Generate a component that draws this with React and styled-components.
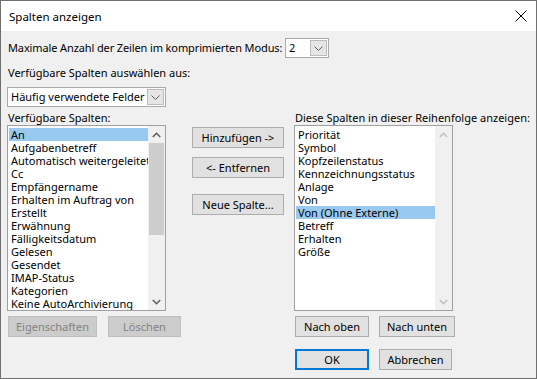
import React from 'react';
import styled, { createGlobalStyle } from 'styled-components';

const Global = createGlobalStyle`
  html, body { margin: 0; padding: 0; background: #ffffff; }
  body { font-family: "Noto Sans", "Segoe UI", sans-serif; font-size: 11px; color: #000; }
  * { box-sizing: border-box; }
`;

const Window = styled.div`
  width: 537px;
  height: 379px;
  border: 1px solid #6f6f6f;
  background: #f0f0f0;
  display: flex;
  flex-direction: column;
  overflow: hidden;
`;

const TitleBar = styled.div`
  height: 30px;
  flex-shrink: 0;
  background: #ffffff;
  display: flex;
  align-items: center;
  justify-content: space-between;
  padding: 0 9px 0 8px;
`;

const Title = styled.span`
  font-size: 11.5px;
  color: #000;
`;

const CloseBtn = styled.div`
  width: 12px;
  height: 12px;
  display: flex;
`;

const Body = styled.div`
  padding: 7px 0 0 6px;
  display: flex;
  flex-direction: column;
`;

const Row = styled.div`
  display: flex;
  align-items: center;
  gap: ${p => p.$gap || 0}px;
  margin-top: ${p => p.$mt || 0}px;
  margin-left: ${p => p.$ml || 0}px;
`;

const Label = styled.div`
  height: 14px;
  line-height: 14px;
  margin-top: ${p => p.$mt || 0}px;
  padding-left: 1px;
  width: ${p => (p.$w ? `${p.$w}px` : 'auto')};
  letter-spacing: ${p => p.$ls || 0}px;
  white-space: nowrap;
`;

const Combo = styled.div`
  width: ${p => p.$w}px;
  height: 20px;
  border: 1px solid #a9a9a9;
  background: #ffffff;
  display: flex;
  padding: 1px;
  margin-top: ${p => p.$mt || 0}px;
`;

const ComboText = styled.div`
  flex: 1;
  line-height: 16px;
  padding-left: 2px;
  white-space: nowrap;
  overflow: hidden;
`;

const DropBtn = styled.div`
  width: 17px;
  height: 16px;
  background: #e5e5e5;
  border: 1px solid #bcbcbc;
  display: flex;
  align-items: center;
  justify-content: center;
`;

const Columns = styled.div`
  display: flex;
  margin-top: 4px;
`;

const Col = styled.div`
  width: ${p => p.$w}px;
  display: flex;
  flex-direction: column;
`;

const MidButtons = styled.div`
  display: flex;
  flex-direction: column;
  padding-top: 16px;
`;

const ListBox = styled.div`
  width: 159px;
  height: 186px;
  border: 1px solid #a0a0a0;
  background: #ffffff;
  display: flex;
  padding-left: 1px;
  overflow: hidden;
`;

const Items = styled.div`
  width: 139px;
  padding-top: 2px;
  display: flex;
  flex-direction: column;
  overflow: hidden;
`;

const Item = styled.div`
  height: 13px;
  line-height: 13px;
  padding-left: 2px;
  white-space: nowrap;
  flex-shrink: 0;
  background: ${p => (p.$sel ? '#99c9ef' : 'transparent')};
`;

const ScrollBar = styled.div`
  width: 17px;
  height: 100%;
  background: #f0f0f0;
  display: flex;
  flex-direction: column;
`;

const ScrollArrow = styled.div`
  height: 17px;
  flex-shrink: 0;
  display: flex;
  align-items: center;
  justify-content: center;
`;

const ScrollTrack = styled.div`
  flex: 1;
  padding: 0 1px;
`;

const Thumb = styled.div`
  height: 92px;
  background: #cdcdcd;
`;

const Btn = styled.button`
  width: ${p => p.$w}px;
  height: 21px;
  margin-top: ${p => p.$mt || 0}px;
  padding: 0;
  font-family: "Noto Sans", "Segoe UI", sans-serif;
  font-size: 11px;
  line-height: 17px;
  color: ${p => (p.disabled ? '#838383' : '#000')};
  background: ${p => (p.disabled ? '#cccccc' : '#e1e1e1')};
  border: ${p => (p.$default ? '2px solid #0078d7' : p.disabled ? '1px solid #bfbfbf' : '1px solid #adadad')};
  white-space: nowrap;
`;

const Chevron = ({ color = '#606060' }) => (
  <svg width="9" height="5" viewBox="0 0 9 5">
    <polyline points="0.5,0.5 4.5,4.5 8.5,0.5" fill="none" stroke={color} strokeWidth="1" />
  </svg>
);

const ScrollChevron = ({ up, color }) => (
  <svg width="9" height="6" viewBox="0 0 9 6">
    <polyline
      points={up ? '0.8,5 4.5,1.3 8.2,5' : '0.8,1 4.5,4.7 8.2,1'}
      fill="none"
      stroke={color}
      strokeWidth="1.6"
    />
  </svg>
);

const List = ({ items, selected, enabled }) => {
  const color = enabled ? '#606060' : '#c0c0c0';
  return (
    <ListBox>
      <Items>
        {items.map(it => (
          <Item key={it} $sel={it === selected}>{it}</Item>
        ))}
      </Items>
      <ScrollBar>
        <ScrollArrow><ScrollChevron up color={color} /></ScrollArrow>
        <ScrollTrack>{enabled && <Thumb />}</ScrollTrack>
        <ScrollArrow><ScrollChevron color={color} /></ScrollArrow>
      </ScrollBar>
    </ListBox>
  );
};

const leftItems = [
  'An',
  'Aufgabenbetreff',
  'Automatisch weitergeleitet',
  'Cc',
  'Empfängername',
  'Erhalten im Auftrag von',
  'Erstellt',
  'Erwähnung',
  'Fälligkeitsdatum',
  'Gelesen',
  'Gesendet',
  'IMAP-Status',
  'Kategorien',
  'Keine AutoArchivierung',
  'Kennzeichnungsstatus',
];

const rightItems = [
  'Priorität',
  'Symbol',
  'Kopfzeilenstatus',
  'Kennzeichnungsstatus',
  'Anlage',
  'Von',
  'Von (Ohne Externe)',
  'Betreff',
  'Erhalten',
  'Größe',
];

export default function App() {
  return (
    <>
      <Global />
      <Window>
        <TitleBar>
          <Title>Spalten anzeigen</Title>
          <CloseBtn>
            <svg width="12" height="12" viewBox="0 0 12 12">
              <path d="M0.5 0.5 L11.5 11.5 M11.5 0.5 L0.5 11.5" stroke="#000" strokeWidth="1" />
            </svg>
          </CloseBtn>
        </TitleBar>
        <Body>
          <Row>
            <Label $w={278} $ls={-0.12}>Maximale Anzahl der Zeilen im komprimierten Modus:</Label>
            <Combo $w={44}>
              <ComboText>2</ComboText>
              <DropBtn><Chevron /></DropBtn>
            </Combo>
          </Row>
          <Label $mt={8}>Verfügbare Spalten auswählen aus:</Label>
          <Combo $w={159} $mt={7}>
            <ComboText>Häufig verwendete Felder</ComboText>
            <DropBtn><Chevron /></DropBtn>
          </Combo>
          <Columns>
            <Col $w={185}>
              <Label>Verfügbare Spalten:</Label>
              <List items={leftItems} selected="An" enabled />
              <Row $mt={5} $ml={1} $gap={11}>
                <Btn $w={89} disabled>Eigenschaften</Btn>
                <Btn $w={73} disabled>Löschen</Btn>
              </Row>
            </Col>
            <Col $w={102}>
              <MidButtons>
                <Btn $w={92}>Hinzufügen -&gt;</Btn>
                <Btn $w={92} $mt={9}>&lt;- Entfernen</Btn>
                <Btn $w={92} $mt={16}>Neue Spalte...</Btn>
              </MidButtons>
            </Col>
            <Col $w={240}>
              <Label>Diese Spalten in dieser Reihenfolge anzeigen:</Label>
              <List items={rightItems} selected="Von (Ohne Externe)" />
              <Row $mt={5} $ml={1} $gap={10}>
                <Btn $w={74}>Nach oben</Btn>
                <Btn $w={76}>Nach unten</Btn>
              </Row>
              <Row $mt={12} $ml={1} $gap={10}>
                <Btn $w={74} $default>OK</Btn>
                <Btn $w={73}>Abbrechen</Btn>
              </Row>
            </Col>
          </Columns>
        </Body>
      </Window>
    </>
  );
}
